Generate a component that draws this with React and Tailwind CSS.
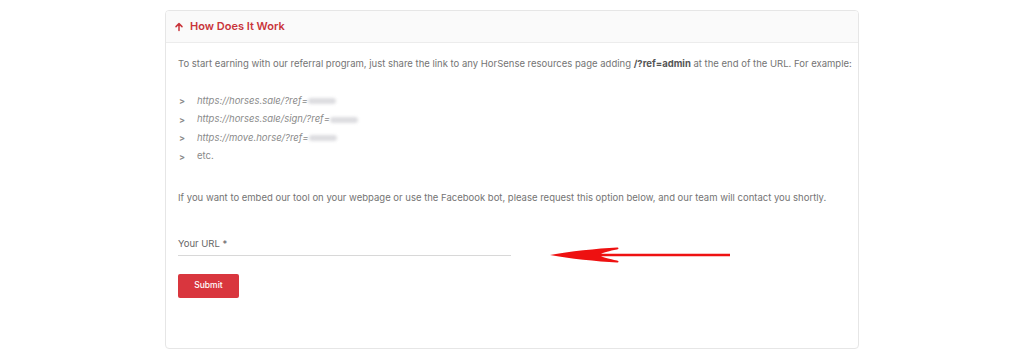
import React from "react";

function Blur({ w }) {
  return <span className="inline-block align-middle h-[6px] rounded-full bg-[#d4d4d8] blur-[1.5px] opacity-80" style={{ width: w }} />;
}

export default function App() {
  const items = [
    { t: "https://horses.sale/?ref=", b: 28 },
    { t: "https://horses.sale/sign/?ref=", b: 28 },
    { t: "https://move.horse/?ref=", b: 28 },
  ];
  return (
    <div className="w-[1024px] h-[358px] bg-white pt-[10px]" style={{ fontFamily: "Inter, 'Noto Sans', sans-serif" }}>
      <div className="ml-[165px] w-[694px] h-[339px] border border-[#e6e6e6] rounded-[4px] overflow-hidden">
        <div className="h-[32px] bg-[#fafafa] border-b border-[#ececec] flex items-center pl-[8px] gap-[6px]">
          <svg width="10" height="10" viewBox="0 0 10 10" className="text-[#c9353b]">
            <path d="M5 8.5V1.8M2 4.6L5 1.6L8 4.6" stroke="currentColor" strokeWidth="1.5" fill="none" strokeLinecap="round" strokeLinejoin="round" />
          </svg>
          <span className="text-[11px] font-semibold text-[#c9353b]">How Does It Work</span>
        </div>
        <div className="pl-[12px] pt-[14px] text-[9.5px] text-[#747474]">
          <p className="leading-[14px]">
            To start earning with our referral program, just share the link to any HorSense resources page adding{" "}
            <b className="font-bold text-[#555]">/?ref=admin</b> at the end of the URL. For example:
          </p>
          <ul className="mt-[23px] flex flex-col gap-[4.5px]">
            {items.map((it, i) => (
              <li key={i} className="flex items-center h-[14px]">
                <span className="w-[19px] text-[#888] text-[9px] font-semibold pl-[1px]">&gt;</span>
                <span className="italic text-[#8a8a8a]">{it.t}</span>
                <Blur w={it.b} />
              </li>
            ))}
            <li className="flex items-center h-[14px]">
              <span className="w-[19px] text-[#888] text-[9px] font-semibold pl-[1px]">&gt;</span>
              <span className="text-[#8a8a8a]">etc.</span>
            </li>
          </ul>
          <p className="mt-[27px] leading-[14px]">
            If you want to embed our tool on your webpage or use the Facebook bot, please request this option below, and our team will contact you shortly.
          </p>
          <div className="mt-[32px] flex items-end">
            <div className="w-[333px] border-b border-[#d8d8d8] pb-[4px]">
              <span className="text-[9.5px] text-[#666]">Your URL *</span>
            </div>
            <svg width="182" height="18" viewBox="0 0 182 18" className="ml-[38px] mb-[-8px]">
              <path d="M1 9 C20 5.5 48 2.5 68 1.5 C70 1.5 70 3 68 3.5 C60 5 55 6.5 52 7.7 L181 7.7 L181 10.3 L52 10.3 C55 11.5 60 13 68 14.5 C70 15 70 16.5 68 16.5 C48 15.5 20 12.5 1 9 Z" fill="#ee1111" />
            </svg>
          </div>
          <button className="mt-[18px] w-[61px] h-[24px] bg-[#d9363e] rounded-[2px] text-white text-[8.5px] font-medium">Submit</button>
        </div>
      </div>
    </div>
  );
}
